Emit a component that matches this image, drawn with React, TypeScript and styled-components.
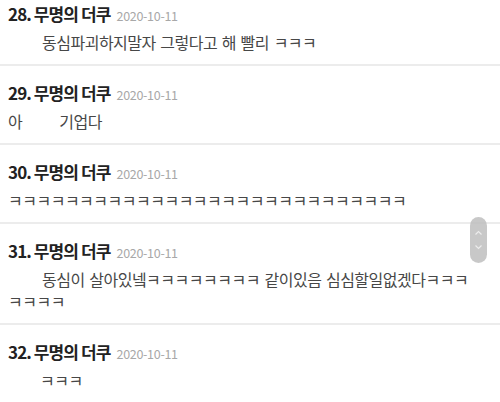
import React from 'react';
import styled, { createGlobalStyle } from 'styled-components';

const GlobalStyle = createGlobalStyle`
  html, body {
    margin: 0;
    padding: 0;
    background: #ffffff;
  }
  body {
    width: 500px;
    height: 402px;
    overflow: hidden;
    font-family: 'Noto Sans CJK KR', 'Noto Sans', sans-serif;
  }
`;

const CommentListWrapper = styled.div`
  margin-top: -13px;
  display: flex;
  flex-direction: column;
`;

const CommentItem = styled.div`
  padding: 16px 0 11px 8px;
  border-bottom: 2px solid #ececec;
`;

const CommentHeader = styled.div`
  display: flex;
  align-items: baseline;
  height: 22px;
  line-height: 22px;
  margin-bottom: 6px;
`;

const CommentNo = styled.span`
  font-size: 17px;
  font-weight: 700;
  color: #222222;
  letter-spacing: -0.9px;
`;

const CommentDate = styled.span`
  margin-left: 6px;
  font-size: 12.5px;
  color: #a8a8a8;
  letter-spacing: -0.3px;
`;

const CommentBody = styled.p<{ $indent?: number }>`
  margin: 0;
  font-size: 16px;
  line-height: 22px;
  color: #474747;
  letter-spacing: -0.5px;
  word-spacing: 1.5px;
  text-indent: ${props => props.$indent ?? 0}px;
`;

const Gap = styled.span<{ $width: number }>`
  display: inline-block;
  width: ${props => props.$width}px;
`;

const ScrollButton = styled.div`
  position: fixed;
  left: 470px;
  top: 217px;
  width: 17px;
  height: 46px;
  border-radius: 9px;
  background: rgba(190, 190, 190, 0.85);
  display: flex;
  flex-direction: column;
  align-items: center;
  justify-content: center;
  gap: 8px;
`;

const ChevronUp = () => (
  <svg width="9" height="6" viewBox="0 0 9 6" fill="none">
    <path d="M1.5 4.5L4.5 1.5L7.5 4.5" stroke="#ececec" strokeWidth="1.2" />
  </svg>
);

const ChevronDown = () => (
  <svg width="9" height="6" viewBox="0 0 9 6" fill="none">
    <path d="M1.5 1.5L4.5 4.5L7.5 1.5" stroke="#ececec" strokeWidth="1.2" />
  </svg>
);

interface CommentProps {
  no: number;
  date: string;
  indent?: number;
  children: React.ReactNode;
}

const Comment: React.FC<CommentProps> = ({ no, date, indent, children }) => (
  <CommentItem>
    <CommentHeader>
      <CommentNo>{no}. 무명의 더쿠</CommentNo>
      <CommentDate>{date}</CommentDate>
    </CommentHeader>
    <CommentBody $indent={indent}>{children}</CommentBody>
  </CommentItem>
);

const App: React.FC = () => {
  return (
    <>
      <GlobalStyle />
      <CommentListWrapper>
        <Comment no={28} date="2020-10-11" indent={34}>
          동심파괴하지말자 그렇다고 해 빨리 ㅋㅋㅋ
        </Comment>
        <Comment no={29} date="2020-10-11">
          아<Gap $width={37} />기업다
        </Comment>
        <Comment no={30} date="2020-10-11">
          ㅋㅋㅋㅋㅋㅋㅋㅋㅋㅋㅋㅋㅋㅋㅋㅋㅋㅋㅋㅋㅋㅋㅋㅋㅋㅋㅋㅋ
        </Comment>
        <Comment no={31} date="2020-10-11" indent={34}>
          동심이 살아있넼ㅋㅋㅋㅋㅋㅋㅋㅋ 같이있음 심심할일없겠다ㅋㅋㅋ
          <br />
          ㅋㅋㅋㅋ
        </Comment>
        <Comment no={32} date="2020-10-11" indent={32}>
          ㅋㅋㅋ
        </Comment>
      </CommentListWrapper>
      <ScrollButton>
        <ChevronUp />
        <ChevronDown />
      </ScrollButton>
    </>
  );
};

export default App;
